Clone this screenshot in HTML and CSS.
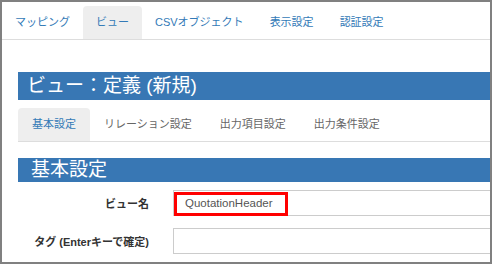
FILE: index.html
```html
<!DOCTYPE html>
<html>
<head>
  <meta charset="utf-8" />
  <title>ビュー定義</title>
  <meta name="viewport" content="width=device-width,initial-scale=1.0" />
  <link rel="stylesheet" href="styles.css">
</head>
<body>
<div class="frame">
  <div class="nav">
    <div class="tab">マッピング</div>
    <div class="tab active">ビュー</div>
    <div class="tab">CSVオブジェクト</div>
    <div class="tab">表示設定</div>
    <div class="tab">認証設定</div>
  </div>
  <div class="content">
    <div class="pageTitle">ビュー：定義 (新規)</div>
    <div class="subnav">
      <div class="subtab active">基本設定</div>
      <div class="subtab">リレーション設定</div>
      <div class="subtab">出力項目設定</div>
      <div class="subtab">出力条件設定</div>
    </div>
    <div class="sectionTitle">基本設定</div>
    <div class="form">
      <label class="label">ビュー名</label>
      <div class="field">
        <div class="input">QuotationHeader</div>
        <div class="highlight"></div>
      </div>
      <label class="label">タグ (Enterキーで確定)</label>
      <div class="field">
        <div class="input"></div>
      </div>
    </div>
  </div>
</div>
</body>
</html>
```

FILE: styles.css
```css
body {
  margin: 0;
  font-family: "Liberation Sans", "Noto Sans CJK JP", sans-serif;
}

.frame {
  width: 492px;
  height: 264px;
  box-sizing: border-box;
  border: 2px solid #808080;
  overflow: hidden;
  background: white;
}

.nav {
  display: flex;
  margin-top: 4px;
  border-bottom: 1px solid #ddd;
}

.tab {
  padding: 10px 13px;
  line-height: 13px;
  font-size: 11px;
  color: #337ab7;
  white-space: nowrap;
  border-radius: 4px 4px 0 0;
}

.tab.active {
  background: #eee;
}

.content {
  width: 600px;
  padding-left: 16px;
  padding-top: 32px;
}

.pageTitle {
  background: #3877b4;
  color: white;
  font-size: 19px;
  line-height: 28px;
  height: 28px;
  padding-left: 9px;
  white-space: nowrap;
}

.subnav {
  display: flex;
  margin-top: 8px;
  border-bottom: 1px solid #ddd;
}

.subtab {
  padding: 10px 14px;
  line-height: 13px;
  font-size: 11px;
  color: #666;
  white-space: nowrap;
  border-radius: 4px 4px 0 0;
}

.subtab.active {
  background: #eee;
  color: #337ab7;
}

.sectionTitle {
  margin-top: 16px;
  background: #3877b4;
  color: white;
  font-size: 19px;
  line-height: 24px;
  height: 24px;
  padding-left: 13px;
}

.form {
  display: grid;
  grid-template-columns: 131px 1fr;
  column-gap: 24px;
  row-gap: 12px;
  margin-top: 8px;
  align-items: center;
}

.label {
  text-align: right;
  font-size: 11px;
  font-weight: bold;
  color: #333;
  white-space: nowrap;
}

.field {
  position: relative;
}

.input {
  height: 26px;
  box-sizing: border-box;
  border: 1px solid #ccc;
  padding-left: 11px;
  line-height: 24px;
  font-size: 11.5px;
  color: #555;
}

.highlight {
  position: absolute;
  left: 1px;
  top: 2px;
  width: 114px;
  height: 24px;
  box-sizing: border-box;
  border: 3px solid #f00;
}
```
